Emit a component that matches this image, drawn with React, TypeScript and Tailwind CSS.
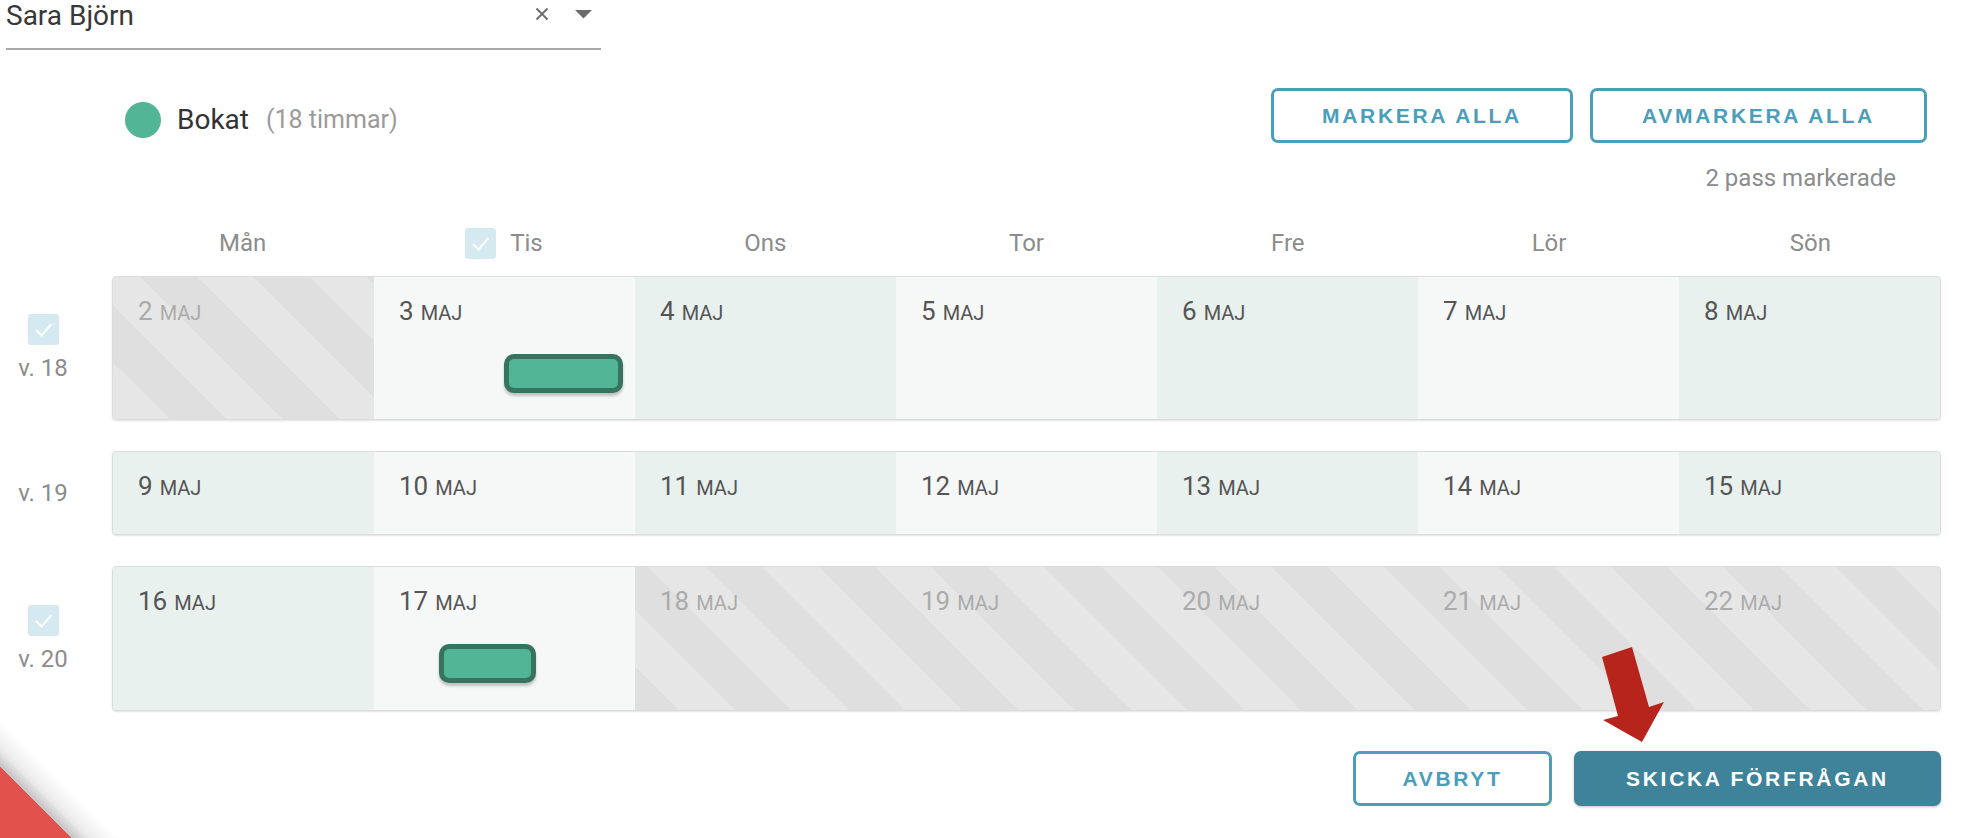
import React from "react";

type Week = {
  label: string;
  checked: boolean;
  height: string;
  days: number[];
  off: number[];
  pill?: string;
};

const weeks: Week[] = [
  { label: "v. 18", checked: true, height: "h-[144px]", days: [2, 3, 4, 5, 6, 7, 8], off: [0], pill: "left-[130px] w-[119px]" },
  { label: "v. 19", checked: false, height: "h-[84px]", days: [9, 10, 11, 12, 13, 14, 15], off: [] },
  { label: "v. 20", checked: true, height: "h-[145px]", days: [16, 17, 18, 19, 20, 21, 22], off: [2, 3, 4, 5, 6], pill: "left-[65px] w-[97px]" },
];

const dayNames = ["Mån", "Tis", "Ons", "Tor", "Fre", "Lör", "Sön"];

function CheckBox() {
  return (
    <div className="w-[31px] h-[31px] rounded-[3px] bg-[#d5e9f1] flex items-center justify-center">
      <svg width="31" height="31" viewBox="0 0 31 31">
        <polyline points="8,16 13.5,21.5 23.5,10" fill="none" stroke="#ffffff" strokeWidth="2" />
      </svg>
    </div>
  );
}

function OutlineButton({ label, width }: { label: string; width: string }) {
  return (
    <button className={`${width} h-[55px] rounded-[7px] border-[3px] border-[#4b9eb9] bg-white text-[#4b9eb9] font-['Liberation_Sans',Arial,sans-serif] font-bold text-[21px] tracking-[2.7px] flex items-center justify-center`}>
      {label}
    </button>
  );
}

export default function App() {
  return (
    <div className="relative w-full h-[838px] bg-white overflow-hidden font-['Roboto',sans-serif]">
      {/* select */}
      <div className="ml-[6px] w-[595px] h-[50px] border-b-2 border-[#a9a9a9] flex items-start justify-between">
        <span className="text-[28px] leading-[32px] text-[#383838]">Sara Björn</span>
        <div className="flex items-start gap-[26px] pr-[9px]">
          <svg width="14" height="14" viewBox="0 0 14 14" className="mt-[7px]">
            <path d="M1.5 1.5 L12.5 12.5 M12.5 1.5 L1.5 12.5" stroke="#6b6b6b" strokeWidth="1.8" />
          </svg>
          <svg width="17" height="9" viewBox="0 0 17 9" className="mt-[10px]">
            <polygon points="0,0 17,0 8.5,8.5" fill="#6b6b6b" />
          </svg>
        </div>
      </div>

      {/* legend + buttons */}
      <div className="mt-[38px] flex items-start justify-between pl-[125px] pr-[39px]">
        <div className="flex items-center mt-[14px]">
          <div className="w-[36px] h-[36px] rounded-full bg-[#52b595]" />
          <span className="ml-[16px] text-[28px] leading-[32px] text-[#333333]">Bokat</span>
          <span className="ml-[17px] text-[25px] leading-[32px] text-[#9a9a9a]">(18 timmar)</span>
        </div>
        <div className="flex gap-[17px]">
          <OutlineButton label="MARKERA ALLA" width="w-[302px]" />
          <OutlineButton label="AVMARKERA ALLA" width="w-[337px]" />
        </div>
      </div>

      <div className="mt-[21px] h-[28px] pr-[70px] text-right text-[24px] leading-[28px] text-[#8c8c8c]">
        2 pass markerade
      </div>

      {/* day header */}
      <div className="mt-[31px] ml-[112px] mr-[25px] h-[40px] grid grid-cols-7">
        {dayNames.map((d) => (
          <div key={d} className="flex items-center justify-center gap-[14px] text-[24px] text-[#8c8c8c]">
            {d === "Tis" && <CheckBox />}
            <span>{d}</span>
          </div>
        ))}
      </div>

      {/* weeks */}
      <div className="mt-[13px] flex flex-col gap-[31px] pr-[25px]">
        {weeks.map((w) => (
          <div key={w.label} className={`flex ${w.height}`}>
            <div className="w-[86px] mr-[26px] flex flex-col items-center justify-center gap-[9px]">
              {w.checked && <CheckBox />}
              <span className="text-[24px] leading-[28px] text-[#8c8c8c]">{w.label}</span>
            </div>
            <div className="flex-1 grid grid-cols-7 rounded-[4px] border border-[#dcdcdc] overflow-hidden shadow-[0_1px_2px_rgba(0,0,0,0.12)] bg-[repeating-linear-gradient(45deg,#e6e6e6_0px,#e6e6e6_40px,#dfdfdf_40px,#dfdfdf_80px)]">
              {w.days.map((n, i) => {
                const off = w.off.includes(i);
                const bg = off ? "bg-transparent" : i % 2 === 0 ? "bg-[#e8f1ee]" : "bg-[#f6f8f8]";
                return (
                  <div key={n} className={`relative ${bg} pl-[25px] pt-[19px]`}>
                    <div className={`flex items-baseline leading-[30px] ${off ? "text-[#ababab]" : "text-[#555555]"}`}>
                      <span className="text-[26px]">{n}</span>
                      <span className="ml-[7px] text-[20px]">MAJ</span>
                    </div>
                    {i === 1 && w.pill && (
                      <div className={`absolute top-[77px] ${w.pill} h-[39px] rounded-[10px] border-[5px] border-[#37745f] bg-[#52b595] shadow-[0_3px_3px_rgba(0,0,0,0.22)]`} />
                    )}
                  </div>
                );
              })}
            </div>
          </div>
        ))}
      </div>

      {/* bottom buttons */}
      <div className="mt-[40px] flex justify-end gap-[22px] pr-[25px]">
        <OutlineButton label="AVBRYT" width="w-[199px]" />
        <button className="w-[367px] h-[55px] rounded-[7px] bg-[#3e8399] text-white font-['Liberation_Sans',Arial,sans-serif] font-bold text-[21px] tracking-[2.7px] shadow-[0_1px_3px_rgba(0,0,0,0.25)] flex items-center justify-center">
          SKICKA FÖRFRÅGAN
        </button>
      </div>

      {/* red arrow annotation */}
      <svg className="absolute left-[1590px] top-[640px]" width="90" height="110" viewBox="0 0 90 110">
        <polygon points="12,17 42,7 59,67 74,62 52,102 13,80 28,76" fill="#b7241b" />
      </svg>

      {/* corner ribbon */}
      <div className="absolute left-0 bottom-0 w-[160px] h-[160px] bg-[linear-gradient(45deg,#e0524b_22.5%,#c4c4c4_22.5%,#ebebeb_28%,rgba(255,255,255,0)_37%)]" />
    </div>
  );
}
